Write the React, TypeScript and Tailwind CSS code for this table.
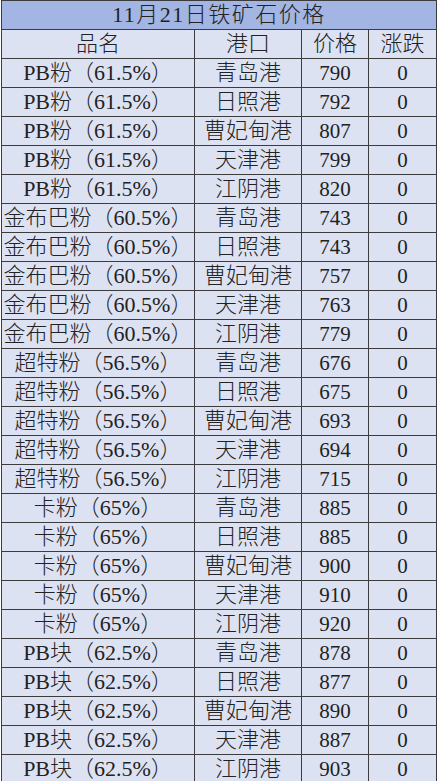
import React from "react";

type Row = { name: string; port: string; price: number; change: number };

const ports = ["青岛港", "日照港", "曹妃甸港", "天津港", "江阴港"];

const groups: { name: string; prices: number[] }[] = [
  { name: "PB粉（61.5%）", prices: [790, 792, 807, 799, 820] },
  { name: "金布巴粉（60.5%）", prices: [743, 743, 757, 763, 779] },
  { name: "超特粉（56.5%）", prices: [676, 675, 693, 694, 715] },
  { name: "卡粉（65%）", prices: [885, 885, 900, 910, 920] },
  { name: "PB块（62.5%）", prices: [878, 877, 890, 887, 903] },
];

const rows: Row[] = groups.flatMap(g =>
  g.prices.map((p, i) => ({ name: g.name, port: ports[i], price: p, change: 0 }))
);

const cell = "border border-[#3c3c3c] h-[29px] p-0 text-center whitespace-nowrap leading-none";

export default function App() {
  return (
    <div
      className="w-[440px] h-[781px] overflow-hidden bg-white text-[#222] font-light"
      style={{ fontFamily: '"Liberation Serif", "Noto Sans CJK SC", serif' }}
    >
      <table className="ml-px w-[435px] border-collapse table-fixed text-[22px] bg-[#dde2f3]">
        <colgroup>
          <col className="w-[193px]" />
          <col className="w-[107px]" />
          <col className="w-[67px]" />
          <col className="w-[68px]" />
        </colgroup>
        <thead>
          <tr>
            <th colSpan={4} className={`${cell} bg-[#a3b5e2] font-light tracking-[1.5px]`}>
              11月21日铁矿石价格
            </th>
          </tr>
          <tr>
            <th className={`${cell} font-light`}>品名</th>
            <th className={`${cell} font-light`}>港口</th>
            <th className={`${cell} font-light`}>价格</th>
            <th className={`${cell} font-light`}>涨跌</th>
          </tr>
        </thead>
        <tbody>
          {rows.map((r, i) => (
            <tr key={i}>
              <td className={`${cell} overflow-hidden`}>{r.name}</td>
              <td className={cell}>{r.port}</td>
              <td className={`${cell} text-[21px]`}>{r.price}</td>
              <td className={`${cell} text-[21px]`}>{r.change}</td>
            </tr>
          ))}
        </tbody>
      </table>
    </div>
  );
}
